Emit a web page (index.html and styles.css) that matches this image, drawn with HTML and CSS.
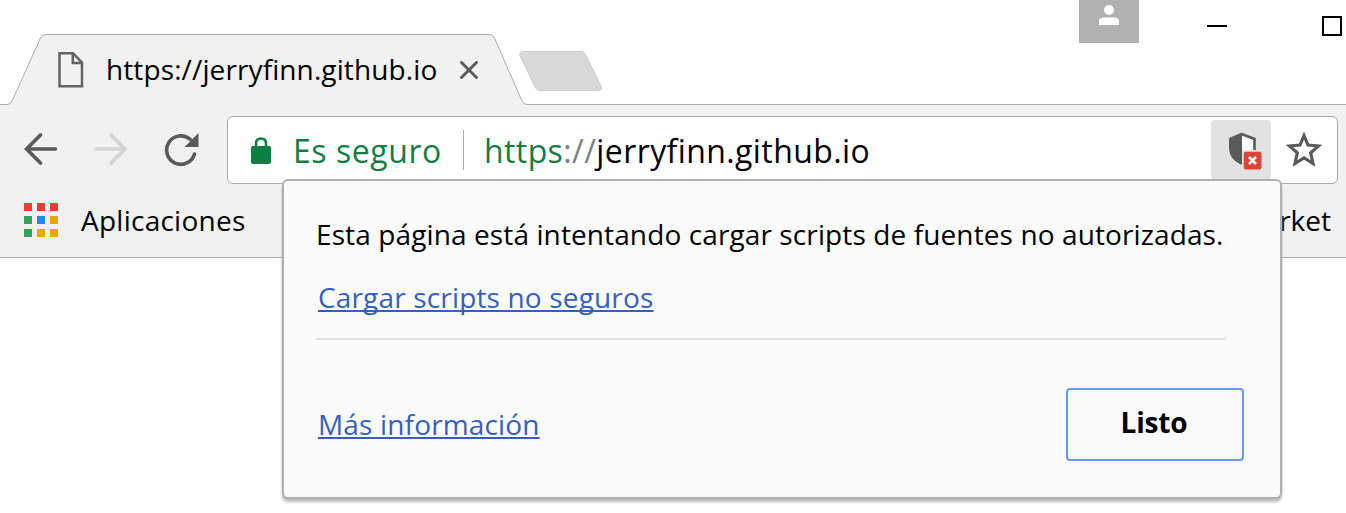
FILE: index.html
```html
<!DOCTYPE html>
<html lang="es">
<head>
<meta charset="utf-8">
<title>https://jerryfinn.github.io</title>
<link rel="stylesheet" href="styles.css">
</head>
<body>
<header class="tabstrip">
  <div class="tab">
    <svg class="tab-shape" width="530" height="72" viewBox="0 0 530 72">
      <path d="M0 70.500H7Q10.500 70.500 12 67L40.500 4Q42 .5 46 .5H489Q493 .5 494.500 4L522 67Q523.500 70.500 527 70.500H530V72H0Z" fill="#f1f1f1"/>
      <path d="M0 70.500H7Q10.500 70.500 12 67L40.500 4Q42 .5 46 .5H489Q493 .5 494.500 4L522 67Q523.500 70.500 527 70.500H530" fill="none" stroke="#acacac"/>
    </svg>
    <svg class="page-icon" width="26" height="36" viewBox="0 0 26 36"><path d="M1.500 1.300H15L24 10.500V34.300H1.500ZM14.800 1.500V11H24" fill="none" stroke="#636363" stroke-width="2.500"/></svg>
    <span class="tab-title">https://jerryfinn.github.io</span>
    <svg class="close" width="18" height="18" viewBox="0 0 18 18"><path d="M1.500 1.500 16.500 16.500M16.500 1.500 1.500 16.500" stroke="#5a5a5a" stroke-width="2.900" stroke-linecap="round"/></svg>
  </div>
  <svg class="new-tab" width="86" height="42" viewBox="0 0 86 42"><path d="M5 1.500H62Q65 1.500 66.500 4.500L82 36Q83.500 40.500 79.500 40.500H21Q17.500 40.500 16 37L.8 5Q0 1.500 5 1.500Z" fill="#d9d9d9" stroke="#cbcbcb"/></svg>
  <div class="window-buttons">
    <div class="profile"><svg width="20" height="21" viewBox="0 0 20 21"><circle cx="10" cy="5" r="5" fill="#fff"/><path d="M0 20V16Q0 12.500 5 12.500H15Q20 12.500 20 16V20Z" fill="#fff"/></svg></div>
    <div class="minimize"></div>
    <div class="maximize"></div>
  </div>
</header>
<nav class="toolbar">
  <svg class="back" width="34" height="32" viewBox="0 0 34 32"><path d="M16.500 2 2.500 16 16.500 30M2.500 16H31.500" fill="none" stroke="#5a5a5a" stroke-width="3.600" stroke-linecap="round"/></svg>
  <svg class="forward" width="34" height="32" viewBox="0 0 34 32"><path d="M17 2 31 16 17 30M31 16H2" fill="none" stroke="#d3d3d3" stroke-width="3.600" stroke-linecap="round"/></svg>
  <svg class="reload" width="36" height="36" viewBox="0 0 36 36"><path d="M26 7.200A14.200 14.200 0 1 0 30.500 22" fill="none" stroke="#5a5a5a" stroke-width="3.600" stroke-linecap="round"/><path d="M34.500 1V15H20.500Z" fill="#5a5a5a"/></svg>
  <div class="omnibox">
    <svg class="lock" width="20" height="27" viewBox="0 0 20 27"><path d="M5 10V6.500Q5 1.500 10 1.500T15 6.500V10" fill="none" stroke="#0b8043" stroke-width="2.600"/><rect y="9" width="20" height="18" rx="2" fill="#0b8043"/></svg>
    <span class="secure">Es seguro</span>
    <span class="url"><span class="scheme">https</span><span class="slashes">://</span><span class="host">jerryfinn.github.io</span></span>
    <span class="shield-box"><svg width="36" height="38" viewBox="0 0 36 38"><path d="M14 1.500 26.500 6.500V16C26.500 25 21.500 30 14 33C6.500 30 2 24 2 16V6.500Z" fill="#fafafa"/><path d="M14 .5V33C6 29.500 1 24.500 1 15.500V6Z" fill="#5a5a5a"/><path d="M13.500 2 26.500 7V18" fill="none" stroke="#5a5a5a" stroke-width="2.600"/><rect x="14" y="18" width="20" height="20" rx="2" fill="#e2e2e2"/><rect x="15.800" y="19.800" width="17.700" height="17.700" rx="2" fill="#db4437"/><path d="M21 25 28 32M28 25 21 32" stroke="#fff" stroke-width="2.500"/></svg></span>
    <svg class="star" width="38" height="37" viewBox="0 0 38 37"><path d="M19 4.500 23 14 33.500 15 25.700 21.800 28 32.500 19 27 10 32.500 12.300 21.800 4.500 15 15 14Z" fill="none" stroke="#5a5a5a" stroke-width="3.200"/></svg>
  </div>
</nav>
<div class="bookmarks">
  <div class="apps"><i class="r"></i><i class="r"></i><i class="r"></i><i class="g"></i><i class="b"></i><i class="y"></i><i class="g"></i><i class="y"></i><i class="y"></i></div>
  <span class="apps-label">Aplicaciones</span>
  <span class="market">rket</span>
</div>
<section class="bubble">
  <p class="message">Esta página está intentando cargar scripts de fuentes no autorizadas.</p>
  <a class="link load">Cargar scripts no seguros</a>
  <hr class="rule">
  <div class="actions">
    <a class="link more">Más información</a>
    <button class="done">Listo</button>
  </div>
</section>
</body>
</html>
```
FILE: styles.css
```css
* { box-sizing: border-box; }
body { margin: 0; height: 513px; overflow: hidden; background: #fff; color: #000; font: 28px/40px "Open Sans", "Noto Sans", sans-serif; position: relative; }
svg { display: block; flex: none; }
span, a, p { white-space: nowrap; }
.tabstrip { height: 105px; display: flex; border-bottom: 1px solid #acacac; }
.tab { width: 530px; height: 71px; margin-top: 34px; position: relative; display: flex; flex: none; }
.tab-shape { position: absolute; left: 0; top: 0; }
.page-icon { margin: 18px 0 0 58px; position: relative; }
.tab-title { width: 354px; margin: 15px 0 0 22px; position: relative; letter-spacing: .11px; }
.close { margin-top: 27px; position: relative; }
.new-tab { margin: 50px 0 0 -11px; }
.window-buttons { margin-left: auto; display: flex; flex: none; }
.profile { width: 60px; height: 43px; background: #b1b1b1; padding: 5px 20px; }
.minimize { width: 20px; height: 2px; background: #000; margin: 25px 0 0 68px; }
.maximize { width: 20px; height: 20px; border: 2px solid #000; margin: 16px 4px 0 95px; }
.toolbar { height: 79px; background: #f1f1f1; display: flex; padding: 11px 8px 0 24px; }
.back { margin-top: 17px; }
.forward { margin: 17px 0 0 36px; }
.reload { margin: 16px 0 0 36px; }
.omnibox { margin-left: 27px; width: 1111px; height: 68px; flex: none; background: #fff; border: 1px solid #a9a9a9; border-radius: 6px; display: flex; font-size: 32px; letter-spacing: .4px; }
.lock { margin: 20px 0 0 23px; }
.secure { width: 171px; height: 40px; line-height: 42px; margin: 13px 0 0 22px; border-right: 1px solid #aaa; letter-spacing: .55px; }
.url { margin: 14px 0 0 20px; }
.secure, .scheme { color: #147d45; }
.slashes { color: #808080; }
.shield-box { width: 60px; height: 60px; margin: 3px 0 0 auto; background: #e2e2e2; border-radius: 4px; padding: 12px 0 0 17px; }
.star { margin: 14px 14px 0 14px; }
.bookmarks { height: 74px; background: #f1f1f1; border-bottom: 1px solid #acacac; display: flex; padding: 16px 15px 0 24px; }
.apps { display: grid; grid-template-columns: repeat(3, 8px); grid-auto-rows: 8px; gap: 5px; height: 34px; margin-top: 3px; }
.r { background: #f33b36; }
.g { background: #35a15c; }
.b { background: #2788f5; }
.y { background: #efa40b; }
.apps-label { margin-left: 23px; letter-spacing: .25px; }
.market { margin-left: auto; }
.bubble { position: absolute; left: 282px; top: 179px; width: 1000px; height: 320px; border: 2px solid #b0b0b0; border-radius: 6px; background: #fbfbfb; box-shadow: 0 3px 3px #bbb; padding: 33px 36px 0 32px; }
.message { margin: 0; letter-spacing: .11px; }
.link { display: block; color: #3560bd; letter-spacing: .16px; text-decoration: underline; text-decoration-thickness: 2px; text-underline-offset: 2px; text-decoration-skip-ink: none; }
.load { margin: 23px 0 0 2px; }
.rule { width: 910px; height: 2px; border: 0; margin: 21px 0 0; background: #e4e4e4; }
.actions { display: flex; justify-content: space-between; margin-top: 48px; }
.more { margin: 16px 0 0 2px; }
.done { width: 178px; height: 73px; border: 2px solid #6a98ea; border-radius: 4px; background: #f9f9f9; color: #000; font: bold 28px/40px "Open Sans", sans-serif; letter-spacing: -.2px; padding: 0 2px 5px 0; }
```
